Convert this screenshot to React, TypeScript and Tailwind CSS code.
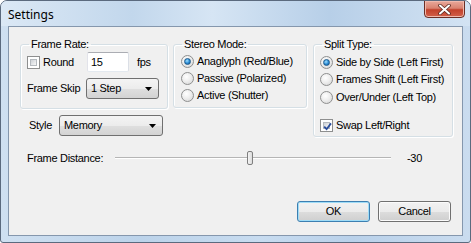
import React from "react";

function Radio({ checked }: { checked?: boolean }) {
  return (
    <span className="w-[13px] h-[13px] rounded-full border border-[#8e8f8f] bg-[radial-gradient(circle_at_40%_35%,#ffffff_0%,#eeeeee_45%,#d2d2d2_100%)] flex items-center justify-center shrink-0">
      {checked && (
        <span className="w-[7px] h-[7px] rounded-full border border-[#1e5b8c] bg-[radial-gradient(circle_at_40%_35%,#9fe0ff_0%,#2a8ad4_55%,#0f4f8a_100%)]" />
      )}
    </span>
  );
}

function Check({ checked }: { checked?: boolean }) {
  return (
    <span className="w-[13px] h-[13px] border border-[#8e8f8f] bg-white p-[2px] shrink-0 flex">
      <span className="relative flex-1 border border-[#b4b9be] bg-gradient-to-br from-[#cdd1d6] to-[#f7f7f7] flex items-center justify-center">
        {checked && (
          <svg width="9" height="9" viewBox="0 0 9 9" className="absolute -left-[1px] -top-[1px]">
            <path d="M1.2 4.6 L3.6 7.2 L8 1.4" fill="none" stroke="#2a4d9b" strokeWidth="1.8" />
          </svg>
        )}
      </span>
    </span>
  );
}

function Combo({ text, w }: { text: string; w: string }) {
  return (
    <div className={`${w} h-[21px] rounded-[3px] border border-[#707070] bg-[linear-gradient(#f4f4f4_0%,#ececec_50%,#dfdfdf_51%,#d3d3d3_100%)] flex items-center justify-between pl-[4px] pr-[6px]`}>
      <span>{text}</span>
      <svg width="7" height="4" viewBox="0 0 7 4">
        <path d="M0 0 H7 L3.5 4 Z" fill="#000" />
      </svg>
    </div>
  );
}

function Button({ text, def }: { text: string; def?: boolean }) {
  return (
    <div
      className={`w-[73px] h-[21px] rounded-[3px] border flex items-center justify-center bg-[linear-gradient(#f2f2f2_0%,#ebebeb_50%,#dddddd_51%,#cfcfcf_100%)] ${
        def ? "border-[#3c7fb1] shadow-[inset_0_0_0_1px_#9fdcf7]" : "border-[#707070] shadow-[inset_0_0_0_1px_#fbfbfb]"
      }`}
    >
      {text}
    </div>
  );
}

export default function App() {
  return (
    <div className="w-[471px] h-[243px] flex flex-col border border-[#5b6a7e] rounded-t-[7px] rounded-b-[3px] bg-[linear-gradient(90deg,#cfe0f1_0%,#bcd3ea_30%,#c8dcf0_55%,#b9d1ea_75%,#cadcef_100%)] overflow-hidden font-['Liberation_Sans',sans-serif] text-[11px] tracking-[-0.3px] text-black leading-[13px]">
      {/* Title bar */}
      <div className="h-[25px] flex justify-between shrink-0 bg-[linear-gradient(90deg,#dbe8f5_0%,#c2d7ec_28%,#d6e5f4_45%,#b7cfe8_70%,#d3e3f3_100%)]">
        <span className="pl-[7px] pt-[6px] font-['Noto_Sans',sans-serif] text-[12px] tracking-normal leading-[15px] text-black">
          Settings
        </span>
        <div className="-mt-[1px] mr-[5px] w-[41px] h-[18px] rounded-b-[4px] border border-[#6b2e25] bg-[linear-gradient(#e9a99b_0%,#d98270_45%,#c2412b_55%,#d2604a_100%)] shadow-[inset_0_0_0_1px_#f0b9ad] flex items-center justify-center">
          <svg width="13" height="11" viewBox="0 0 13 11">
            <path d="M2 1.5 L11 9.5 M11 1.5 L2 9.5" stroke="#5b2a22" strokeWidth="3.6" strokeLinecap="round" />
            <path d="M2 1.5 L11 9.5 M11 1.5 L2 9.5" stroke="#ffffff" strokeWidth="2" strokeLinecap="round" />
          </svg>
        </div>
      </div>

      {/* Client */}
      <div className="flex-1 mx-[7px] mb-[6px] border border-[#8597ad] bg-[#f0f0f0] flex flex-col">
        <div className="flex items-start mt-[11px]">
          {/* left column */}
          <div className="flex flex-col ml-[11px]">
            <fieldset className="w-[148px] h-[71px] border border-[#d5dfe5] rounded-[3px] px-[6px] shadow-[inset_1px_1px_0_#fff,1px_1px_0_#fff]">
              <legend className="ml-[2px] px-[2px]">Frame Rate:</legend>
              <div className="flex items-center h-[20px] mt-[1px]">
                <div className="w-[60px] flex items-center">
                  <Check />
                  <span className="ml-[3px]">Round</span>
                </div>
                <div className="w-[42px] h-[20px] rounded-[2px] border border-[#abadb3] border-b-[#e3e9ef] border-r-[#dbdfe6] border-l-[#e2e3ea] bg-white flex items-center pl-[3px]">
                  15
                </div>
                <span className="ml-[8px]">fps</span>
              </div>
              <div className="flex items-center mt-[6px]">
                <span className="w-[59px]">Frame Skip</span>
                <Combo text="1 Step" w="w-[73px]" />
              </div>
            </fieldset>
            <div className="flex items-center mt-[6px]">
              <span className="ml-[9px] w-[30px]">Style</span>
              <Combo text="Memory" w="w-[104px]" />
            </div>
          </div>

          {/* Stereo Mode */}
          <fieldset className="ml-[5px] w-[134px] h-[70px] border border-[#d5dfe5] rounded-[3px] px-[7px] shadow-[inset_1px_1px_0_#fff,1px_1px_0_#fff]">
            <legend className="ml-[1px] px-[2px]">Stereo Mode:</legend>
            <div className="flex flex-col mt-[2px]">
              <div className="h-[17px] flex items-center">
                <Radio checked />
                <span className="ml-[3px]">Anaglyph (Red/Blue)</span>
              </div>
              <div className="h-[17px] flex items-center">
                <Radio />
                <span className="ml-[3px]">Passive (Polarized)</span>
              </div>
              <div className="h-[17px] flex items-center">
                <Radio />
                <span className="ml-[3px]">Active (Shutter)</span>
              </div>
            </div>
          </fieldset>

          {/* Split Type */}
          <fieldset className="ml-[6px] w-[140px] h-[99px] border border-[#d5dfe5] rounded-[3px] px-[6px] shadow-[inset_1px_1px_0_#fff,1px_1px_0_#fff]">
            <legend className="ml-[2px] px-[2px]">Split Type:</legend>
            <div className="flex flex-col mt-[2px]">
              <div className="h-[18px] flex items-center">
                <Radio checked />
                <span className="ml-[3px]">Side by Side (Left First)</span>
              </div>
              <div className="h-[17px] flex items-center">
                <Radio />
                <span className="ml-[3px]">Frames Shift (Left First)</span>
              </div>
              <div className="h-[18px] flex items-center">
                <Radio />
                <span className="ml-[3px]">Over/Under (Left Top)</span>
              </div>
              <div className="h-[17px] flex items-center mt-[11px]">
                <Check checked />
                <span className="ml-[3px]">Swap Left/Right</span>
              </div>
            </div>
          </fieldset>
        </div>

        {/* Frame Distance */}
        <div className="flex items-center h-[14px] mt-[14px]">
          <span className="ml-[18px] w-[88px]">Frame Distance:</span>
          <div className="relative w-[276px] h-[14px] flex items-center">
            <div className="w-full h-[2px] border-t border-[#b5b5b5] border-b border-b-[#ffffff] bg-[#e6e6e6]" />
            <div className="absolute left-[132px] top-0 w-[6px] h-[14px] rounded-[2px] border border-[#7f7f7f] bg-[linear-gradient(90deg,#f4f4f4,#dcdcdc)]" />
          </div>
          <span className="ml-[16px]">-30</span>
        </div>

        {/* Buttons */}
        <div className="flex justify-end gap-[8px] mr-[11px] mt-[36px]">
          <Button text="OK" def />
          <Button text="Cancel" />
        </div>
      </div>
    </div>
  );
}
